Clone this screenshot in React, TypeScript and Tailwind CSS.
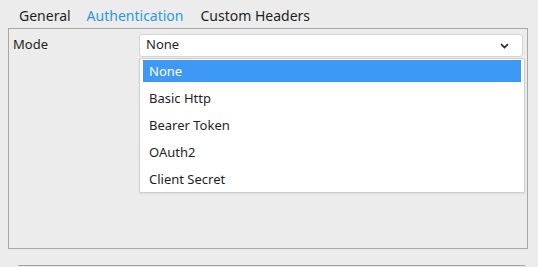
import React from "react";

const items = ["None", "Basic Http", "Bearer Token", "OAuth2", "Client Secret"];

export default function App() {
  return (
    <div
      className="relative w-[538px] h-[267px] bg-[#ececec] text-[#1f1f1f] overflow-hidden"
      style={{ fontFamily: '"Noto Sans", "Open Sans", sans-serif' }}
    >
      <div className="flex items-center h-[28px] pl-[19px] gap-[16px] text-[14px] pt-[2px]">
        <span>General</span>
        <span className="text-[#2a9ae0] mr-[1px]">Authentication</span>
        <span>Custom Headers</span>
      </div>
      <div className="ml-[8px] w-[520px] h-[221px] border border-[#a8a8a8]">
        <div className="flex pt-[5px] pl-[4px]">
          <div className="w-[126px] text-[13px] leading-[21px]">Mode</div>
          <div className="w-[384px] h-[23px] bg-white border border-[#d4d4d4] rounded-[3px] flex items-center justify-between pl-[6px] pr-[13px] text-[13px]">
            <span className="-mt-[1px]">None</span>
            <svg width="9" height="6" viewBox="0 0 9 6">
              <path d="M1 1.2 L4.5 4.5 L8 1.2" fill="none" stroke="#333" strokeWidth="1.8" />
            </svg>
          </div>
        </div>
      </div>
      <div className="ml-[18px] mt-[16px] w-[507px] h-[1px] bg-[#a0a0a0]" />
      <div className="absolute left-[139px] top-[58px] w-[386px] h-[135px] bg-white border border-[#cfcfcf] rounded-[2px] shadow-[0_1px_2px_rgba(0,0,0,0.08)] pt-[1px] px-[3px] flex flex-col gap-[5px]">
        {items.map((it, i) => (
          <div
            key={it}
            className={`h-[22px] flex items-center pl-[6px] pt-[1px] text-[13px] ${
              i === 0 ? "bg-[#3d99f5] text-white" : ""
            }`}
          >
            {it}
          </div>
        ))}
      </div>
    </div>
  );
}
